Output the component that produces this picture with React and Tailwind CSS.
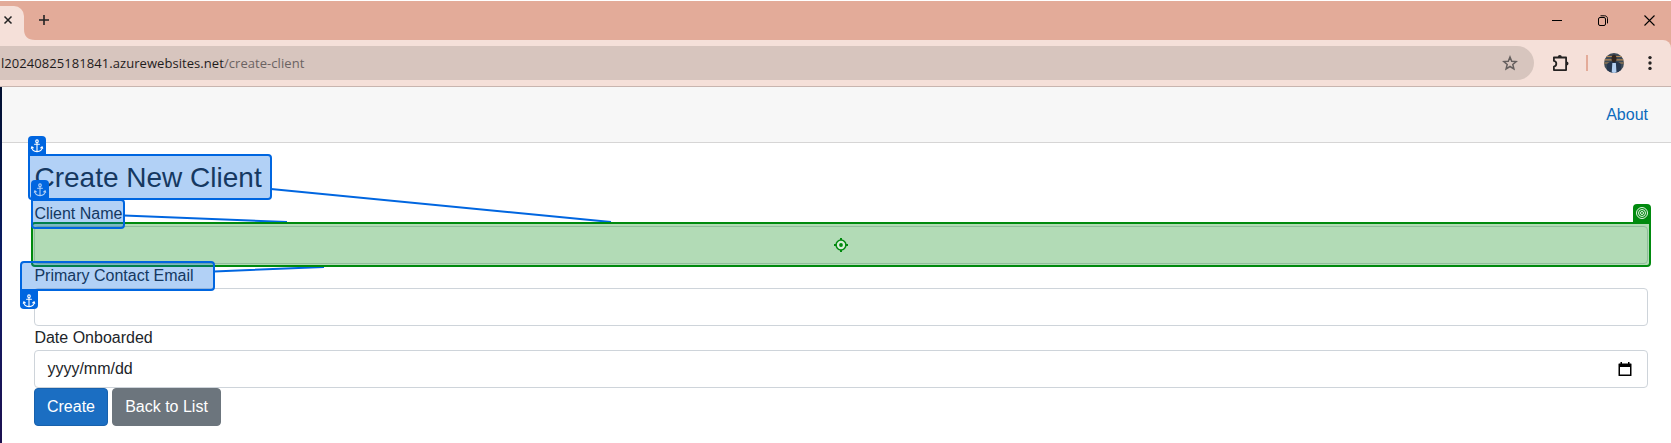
import React from "react";

function Anchor() {
  return (
    <svg className="h-[14px] w-[14px]" viewBox="0 0 14 14" fill="none" stroke="#fff" strokeWidth="1.1" strokeLinecap="round">
      <circle cx="7" cy="2.2" r="1.3" />
      <path d="M7 3.6V12.6M4.6 5.3h4.8M1.8 8.2c.1 2.600 2.400 4.300 5.200 4.400 2.800-.1 5.100-1.800 5.200-4.400M1.300 9.300l.6-1.500 1.300 1M12.700 9.300l-.6-1.500-1.300 1" />
    </svg>
  );
}

function TitleBar() {
  return (
    <div className="mt-px flex h-[39px] bg-[#e3ab99]">
      <div className="mt-[5px] flex h-[34px] w-6 rounded-tr-[10px] bg-[#f5e0d9]">
        <svg className="ml-[3px] mt-[9px] h-[10px] w-[10px]" viewBox="0 0 10 10" stroke="#222" strokeWidth="1.5">
          <path d="M1.500 1.500l7 7M8.500 1.500l-7 7" />
        </svg>
      </div>
      <svg className="h-[11px] w-[11px] self-end" viewBox="0 0 11 11">
        <path d="M0 0Q0 11 11 11H0Z" fill="#f5e0d9" />
      </svg>
      <svg className="ml-[4px] mt-[14px] h-[10px] w-[10px]" viewBox="0 0 10 10" stroke="#222" strokeWidth="1.6">
        <path d="M5 0v10M0 5h10" />
      </svg>
      <div className="flex-1" />
      <svg className="mr-[36px] mt-[14px] h-[11px] w-[10px]" viewBox="0 0 10 11" stroke="#000">
        <path d="M0 5.500h10" />
      </svg>
      <svg className="mr-[36px] mt-[14px] h-[11px] w-[10px]" viewBox="0 0 10 11" fill="none" stroke="#000">
        <rect x=".5" y="2.500" width="7" height="8" rx="1.500" />
        <path d="M2.500.8h4.200c1.600 0 2.800 1.200 2.800 2.800v4.800" />
      </svg>
      <svg className="mr-[16px] mt-[14px] h-[11px] w-[11px]" viewBox="0 0 11 11" stroke="#000" strokeWidth="1.100">
        <path d="M.5.5l10 10M10.500.5l-10 10" />
      </svg>
    </div>
  );
}

function Avatar() {
  return (
    <svg className="ml-4 h-5 w-5" viewBox="0 0 20 20">
      <clipPath id="avatar-clip"><circle cx="10" cy="10" r="10" /></clipPath>
      <g clipPath="url(#avatar-clip)">
        <path fill="#3d4a57" d="M0 0h20v20H0z" />
        <path stroke="#b58a55" strokeWidth="1.200" d="M0 3.500h20M0 6.800h20M0 10h20" />
        <path fill="#26374f" d="M3 20v-8c0-2 3-3.500 7-3.500s7 1.500 7 3.500v8z" />
        <path fill="#b4d0f0" d="M8.300 10h3.600l.6 10H7.700z" />
        <ellipse cx="10" cy="5.500" rx="2.500" ry="3.800" fill="#33261f" />
      </g>
    </svg>
  );
}

function Toolbar() {
  return (
    <div className="bg-[#e3ab99]">
      <div className="flex h-[47px] items-start rounded-tr-[8px] border-b border-[#c8b5af] bg-[#f5e0d9] pt-[6px]">
        <div className="flex h-[34px] w-[1534px] items-center rounded-r-full bg-[#d7c5be] pl-px pr-4">
          <span className="flex-1 whitespace-nowrap font-['Open_Sans',sans-serif] text-[13px] leading-5 tracking-[0.06px] text-[#1f1c1c]">
            l20240825181841.azurewebsites.net<span className="text-[#6b6362]">/create-client</span>
          </span>
          <svg className="h-4 w-4" viewBox="0 0 16 16" fill="none" stroke="#655f5e" strokeWidth="1.500">
            <path d="M8 2l1.700 4.200 4.500.4-3.400 2.900 1.100 4.400L8 11.500l-3.900 2.400 1.100-4.400L1.800 6.600l4.500-.4z" />
          </svg>
        </div>
        <div className="flex h-[34px] flex-1 items-center">
          <svg className="ml-[18px] h-[18px] w-[18px]" viewBox="0 0 18 18" fill="none" stroke="#252222" strokeWidth="1.800">
            <path strokeLinejoin="round" d="M1.900 3.500h12.200v12.600H1.900v-3.500c3.200-.5 3.200-5.200 0-5.700z" />
            <path fill="#252222" stroke="none" d="M5.800 3a2 2 0 0 1 4 0zM14.500 7.500a2 2 0 0 1 0 4z" />
          </svg>
          <div className="ml-4 h-4 w-[2px] bg-[#e3ab99]" />
          <Avatar />
          <svg className="ml-[18px] h-4 w-4" viewBox="0 0 16 16" fill="#252222">
            <circle cx="8" cy="2.600" r="1.700" />
            <circle cx="8" cy="8" r="1.700" />
            <circle cx="8" cy="13.400" r="1.700" />
          </svg>
        </div>
      </div>
    </div>
  );
}

function ClientForm() {
  return (
    <form className="flex flex-col pl-8 pr-[23px] pt-[18px] text-base leading-6 text-[#212529]">
      <h1 className="mb-[7px] pl-[0.5px] text-[28px] leading-[34px]">Create New Client</h1>
      <label className="pl-[0.4px]">Client Name</label>
      <div className="h-[38px] rounded border border-[#ced4da]" />
      <label className="pl-[0.4px]">Primary Contact Email</label>
      <div className="h-[38px] rounded border border-[#ced4da]" />
      <label className="pl-[0.4px]">Date Onboarded</label>
      <div className="flex h-[38px] items-center justify-between rounded border border-[#ced4da] pl-[12.4px] pr-[15px]">
        <span>yyyy/mm/dd</span>
        <svg className="h-[14px] w-[14px]" viewBox="0 0 14 14">
          <path fill="#000" d="M1 1.500h1.500V0H4v1.500h6V0h1.500v1.500H13q.5 0 .5.500V13.500q0 .5-.5.500H1q-.5 0-.5-.500V2q0-.5.500-.5zM2 5v7.500h10V5z" />
        </svg>
      </div>
      <div className="flex gap-1 text-white">
        <button type="button" className="h-[38px] w-[74px] rounded border border-[#1861ac] bg-[#1b6ec2]">Create</button>
        <button type="button" className="h-[38px] w-[109px] rounded border border-[#6c757d] bg-[#6c757d]">Back to List</button>
      </div>
    </form>
  );
}

function Overlay() {
  return (
    <div className="pointer-events-none absolute inset-0">
      <svg className="absolute inset-0 h-full w-full" viewBox="0 0 1671 443" stroke="#0066e0" strokeWidth="2">
        <path d="M271 189L611 222M124 215.500L287 222M214 271.500L324 267" />
      </svg>
      <div className="absolute left-[31px] top-[222px] flex h-[45px] w-[1620px] items-center justify-center rounded-[4px] rounded-tr-none border-2 border-[#008a0e] bg-[#008a0e]/30">
        <svg className="h-[14px] w-[14px]" viewBox="0 0 14 14" fill="none" stroke="#008a0e" strokeWidth="1.500">
          <circle cx="7" cy="7" r="4.900" fill="#d5edd6" />
          <circle cx="7" cy="7" r="1.900" fill="#008a0e" stroke="none" />
          <path strokeWidth="2" d="M7 0v2M7 12v2M0 7h2M12 7h2" />
        </svg>
      </div>
      <div className="absolute left-[1633px] top-[204px] flex h-[19px] w-[18px] justify-center rounded-t-[4px] bg-[#008a0e] pt-[3px]">
        <svg className="h-3 w-3" viewBox="0 0 12 12" fill="none" stroke="#e6f4e7" strokeWidth="1">
          <circle cx="6" cy="6" r="5.500" />
          <circle cx="6" cy="6" r="3.500" />
          <circle cx="6" cy="6" r="1.500" />
        </svg>
      </div>
      <div className="absolute left-[31px] top-[180px] flex h-[20px] w-[18px] justify-center rounded-t-[4px] bg-[#0066e0] pt-[3px]"><Anchor /></div>
      <div className="absolute left-[31px] top-[199px] h-[30px] w-[94px] rounded-[4px] rounded-tl-none border-2 border-[#0066e0] bg-[#0066e0]/30" />
      <div className="absolute left-[28px] top-[154px] h-[46px] w-[244px] rounded-[4px] rounded-tl-none border-2 border-[#0066e0] bg-[#0066e0]/30" />
      <div className="absolute left-[28px] top-[136px] flex h-[19px] w-[18px] justify-center rounded-t-[4px] bg-[#0066e0] pt-[3px]"><Anchor /></div>
      <div className="absolute left-[20px] top-[261px] h-[30px] w-[195px] rounded-[4px] rounded-bl-none border-2 border-[#0066e0] bg-[#0066e0]/30" />
      <div className="absolute left-[20px] top-[290px] flex h-[19px] w-[18px] justify-center rounded-b-[4px] bg-[#0066e0] pt-[4px]"><Anchor /></div>
    </div>
  );
}

export default function App() {
  return (
    <div className="relative h-[443px] w-[1671px] overflow-hidden bg-white font-['Liberation_Sans',sans-serif]">
      <TitleBar />
      <Toolbar />
      <div className="flex h-[356px]">
        <div className="w-[2px] bg-linear-to-b from-[#020f30] via-[#0b1c68] to-[#1c1050]" />
        <div className="flex-1">
          <nav className="flex h-14 items-center justify-end border-b border-[#d6d5d5] bg-[#f7f7f7] pr-[23px]">
            <a className="text-base leading-6 text-[#0c6bbd]">About</a>
          </nav>
          <ClientForm />
        </div>
      </div>
      <Overlay />
    </div>
  );
}
